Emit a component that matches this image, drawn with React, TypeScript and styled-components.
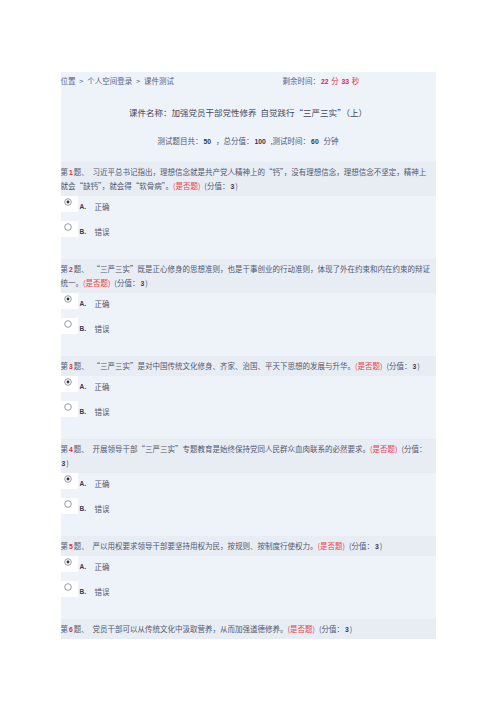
import React from 'react'
import styled, { createGlobalStyle } from 'styled-components'

const GlobalStyle = createGlobalStyle`
  html, body {
    margin: 0;
    padding: 0;
    background: #fff;
  }
  body {
    font-family: "Noto Sans CJK SC", "DejaVu Sans", sans-serif;
  }
`

const Panel = styled.div`
  width: 375px;
  margin: 72px auto 0;
  background: #eef3fa;
  color: #525870;
  font-size: 7.5px;
  word-spacing: 0.28em;
`

const TopBar = styled.div`
  display: grid;
  grid-template-columns: 222px 1fr;
  height: 18px;
  line-height: 18px;
  color: #5b6284;
`

const Timer = styled.span`
  color: #e5343f;
  word-spacing: 0;
`

const CourseName = styled.div`
  margin-top: 13px;
  text-align: center;
  line-height: 18px;
  font-size: 8.5px;
  color: #434861;
`

const Info = styled.div`
  margin-top: 11px;
  text-align: center;
  line-height: 18px;
`

const Wide = styled.span`
  font-variant-east-asian: full-width;
`

const Num = styled.b<{ $red?: boolean }>`
  margin: 0 1px;
  font-family: "Liberation Sans", sans-serif;
  font-weight: bold;
  font-size: 6.8px;
  line-height: 1;
  color: ${p => (p.$red ? '#e02a2a' : '#333a52')};
`

const Questions = styled.div`
  margin-top: 12px;
`

const Title = styled.div`
  background: #e8edf4;
  padding: 3px 2px 3px 0;
  line-height: 14px;
`

const Tag = styled.span`
  color: #e8424f;
`

const Options = styled.div`
  padding-bottom: 13px;
`

const Option = styled.label`
  display: flex;
  align-items: flex-end;
  height: 16px;
  margin-bottom: 9px;
`

const RadioBox = styled.span`
  display: flex;
  align-self: stretch;
  width: 17px;
  padding: 2px 0 0 3px;
  box-sizing: border-box;
  background: #fff;
`

const Letter = styled.b`
  width: 15px;
  margin-left: 2px;
  font-family: "Liberation Sans", sans-serif;
  font-size: 6.5px;
  line-height: 10px;
  color: #333a52;
`

const OptText = styled.span`
  line-height: 10px;
`

const Radio = ({ checked }: { checked: boolean }) => (
  <svg width="8" height="8" viewBox="0 0 8 8">
    <circle cx="4" cy="4" r="3.3" fill="#fff" stroke="#8b909c" strokeWidth="0.9" />
    {checked && <circle cx="4" cy="4" r="1.4" fill="#2f3340" />}
  </svg>
)

// curly quotes are drawn full width, as in the source page
const fw = (s: string) =>
  s.split(/([“”])/).map((part, i) => (part === '“' || part === '”' ? <Wide key={i}>{part}</Wide> : part))

const questions = [
  '习近平总书记指出，理想信念就是共产党人精神上的“钙”，没有理想信念，理想信念不坚定，精神上就会“缺钙”，就会得“软骨病”。',
  '“三严三实”既是正心修身的思想准则，也是干事创业的行动准则，体现了外在约束和内在约束的辩证统一。',
  '“三严三实”是对中国传统文化修身、齐家、治国、平天下思想的发展与升华。',
  '开展领导干部“三严三实”专题教育是始终保持党同人民群众血肉联系的必然要求。',
  '严以用权要求领导干部要坚持用权为民，按规则、按制度行使权力。',
  '党员干部可以从传统文化中汲取营养，从而加强道德修养。',
]

const App = () => (
  <>
    <GlobalStyle />
    <Panel>
      <TopBar>
        <span>位置 &gt; 个人空间登录 &gt; 课件测试</span>
        <span>
          剩余时间：<Timer><Num $red>22</Num> 分 <Num $red>33</Num> 秒</Timer>
        </span>
      </TopBar>
      <CourseName>课件名称：加强党员干部党性修养 自觉践行{fw('“三严三实”')}（上）</CourseName>
      <Info>
        测试题目共：<Num>50</Num> ，总分值：<Num>100</Num> ,测试时间：<Num>60</Num> 分钟
      </Info>
      <Questions>
        {questions.map((q, i) => (
          <div key={i}>
            <Title>
              第<Num $red>{i + 1}</Num>题、 {fw(q)}<Tag>(是否题)</Tag> (分值：<Num>3</Num>)
            </Title>
            {i < questions.length - 1 && (
              <Options>
                <Option>
                  <RadioBox><Radio checked /></RadioBox>
                  <Letter>A.</Letter>
                  <OptText>正确</OptText>
                </Option>
                <Option>
                  <RadioBox><Radio checked={false} /></RadioBox>
                  <Letter>B.</Letter>
                  <OptText>错误</OptText>
                </Option>
              </Options>
            )}
          </div>
        ))}
      </Questions>
    </Panel>
  </>
)

export default App
